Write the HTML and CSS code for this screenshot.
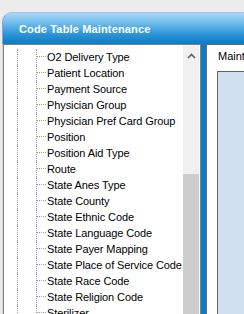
FILE: index.html
```html
<!DOCTYPE html>
<html>
<head>
<meta charset="utf-8">
<link rel="stylesheet" href="styles.css">
</head>
<body>
<div class="window">
  <div class="titlebar"><span class="title">Code Table Maintenance</span></div>
  <div class="content">
    <div class="left-panel">
      <div class="tree">
        <div class="row"><span class="indent"></span><span class="guide"></span><span class="branch"></span><span class="label">O2 Delivery Type</span></div>
        <div class="row"><span class="indent"></span><span class="guide"></span><span class="branch"></span><span class="label">Patient Location</span></div>
        <div class="row"><span class="indent"></span><span class="guide"></span><span class="branch"></span><span class="label">Payment Source</span></div>
        <div class="row"><span class="indent"></span><span class="guide"></span><span class="branch"></span><span class="label">Physician Group</span></div>
        <div class="row"><span class="indent"></span><span class="guide"></span><span class="branch"></span><span class="label">Physician Pref Card Group</span></div>
        <div class="row"><span class="indent"></span><span class="guide"></span><span class="branch"></span><span class="label">Position</span></div>
        <div class="row"><span class="indent"></span><span class="guide"></span><span class="branch"></span><span class="label">Position Aid Type</span></div>
        <div class="row"><span class="indent"></span><span class="guide"></span><span class="branch"></span><span class="label">Route</span></div>
        <div class="row"><span class="indent"></span><span class="guide"></span><span class="branch"></span><span class="label">State Anes Type</span></div>
        <div class="row"><span class="indent"></span><span class="guide"></span><span class="branch"></span><span class="label">State County</span></div>
        <div class="row"><span class="indent"></span><span class="guide"></span><span class="branch"></span><span class="label">State Ethnic Code</span></div>
        <div class="row"><span class="indent"></span><span class="guide"></span><span class="branch"></span><span class="label">State Language Code</span></div>
        <div class="row"><span class="indent"></span><span class="guide"></span><span class="branch"></span><span class="label">State Payer Mapping</span></div>
        <div class="row"><span class="indent"></span><span class="guide"></span><span class="branch"></span><span class="label">State Place of Service Code</span></div>
        <div class="row"><span class="indent"></span><span class="guide"></span><span class="branch"></span><span class="label">State Race Code</span></div>
        <div class="row"><span class="indent"></span><span class="guide"></span><span class="branch"></span><span class="label">State Religion Code</span></div>
        <div class="row"><span class="indent"></span><span class="guide"></span><span class="branch"></span><span class="label">Sterilizer</span></div>
      </div>
      <div class="scrollbar">
        <div class="sb-up">
          <svg width="9" height="6" viewBox="0 0 9 6"><path d="M1 5 L4.5 1.5 L8 5" fill="none" stroke="#606060" stroke-width="1.6"/></svg>
        </div>
        <div class="sb-track"></div>
        <div class="sb-thumb"></div>
      </div>
    </div>
    <div class="splitter"></div>
    <div class="right-panel">
      <div class="caption">Maintenance</div>
      <div class="detail-box"></div>
    </div>
  </div>
</div>
</body>
</html>
```
FILE: styles.css
```css
html, body {
  margin: 0;
  padding: 0;
}
body {
  width: 244px;
  height: 314px;
  overflow: hidden;
  background: #ececec;
  font-family: "Liberation Sans", Arial, sans-serif;
}
.window {
  margin: 12px 0 0 2px;
  width: 270px;
}
.titlebar {
  box-sizing: border-box;
  height: 32px;
  border-top-left-radius: 10px;
  border-left: 1px solid #9a9ad8;
  border-top: 1px solid #a9bfe6;
  background: linear-gradient(to bottom, #a9d9f6 0%, #6ab9ea 35%, #2d95d8 68%, #0a7bc4 100%);
  padding: 6px 0 0 16px;
}
.title {
  color: #ffffff;
  font-weight: bold;
  font-size: 11px;
  line-height: 15px;
  letter-spacing: 0.15px;
}
.content {
  display: flex;
  height: 280px;
  border-left: 1px solid #d8d8d8;
}
.left-panel {
  box-sizing: border-box;
  width: 198px;
  flex: none;
  display: flex;
  background: #ffffff;
  border: 1px solid #828282;
  border-bottom: none;
}
.tree {
  flex: 1;
  padding-top: 4px;
  overflow: hidden;
}
.row {
  display: flex;
  height: 16px;
}
.indent {
  width: 13px;
  flex: none;
}
.guide {
  width: 18px;
  flex: none;
  border-left: 1px dotted #a0a0a0;
}
.branch {
  width: 10px;
  flex: none;
  border-left: 1px dotted #a0a0a0;
  position: relative;
}
.branch::after {
  content: "";
  position: absolute;
  left: 0;
  top: 7px;
  width: 9px;
  border-top: 1px dotted #a0a0a0;
}
.label {
  font-size: 11px;
  line-height: 16px;
  color: #000000;
  white-space: nowrap;
  letter-spacing: -0.1px;
}
.scrollbar {
  width: 16px;
  flex: none;
  margin-right: 1px;
  background: #f0f0f0;
  display: flex;
  flex-direction: column;
}
.sb-up {
  height: 17px;
  display: flex;
  align-items: center;
  justify-content: center;
  padding-top: 2px;
}
.sb-track {
  height: 110px;
}
.sb-thumb {
  flex: 1;
  background: #cdcdcd;
}
.splitter {
  width: 5px;
  flex: none;
  background: #0b7cc5;
}
.right-panel {
  flex: 1;
  background: #ffffff;
  border-left: 1px solid #6b6b6b;
  border-top: 1px solid #6b6b6b;
}
.caption {
  font-size: 11px;
  line-height: 13px;
  padding: 5px 0 0 11px;
  color: #000000;
  white-space: nowrap;
}
.detail-box {
  margin: 8px 0 0 10px;
  height: 260px;
  background: #d0e0f1;
  border-left: 1px solid #646464;
  border-top: 1px solid #646464;
}
```
